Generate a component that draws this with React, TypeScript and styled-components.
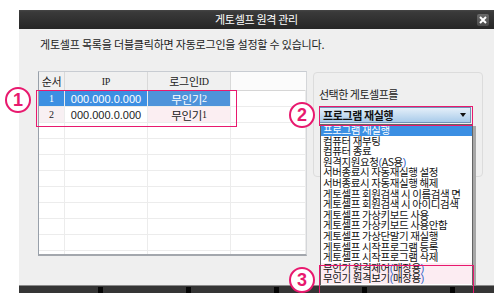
import React from "react";
import styled, { createGlobalStyle } from "styled-components";

const PINK = "#e8196e";
const KR = `"Noto Sans CJK KR", "Noto Sans", sans-serif`;

const GlobalStyle = createGlobalStyle`
  body {
    margin: 0;
    background: #ffffff;
    font-family: ${KR};
  }
`;

const Window = styled.div`
  position: relative;
  width: 475px;
  margin: 10px 0 0 19px;
`;

const TitleBar = styled.div`
  height: 19px;
  display: grid;
  grid-template-columns: 1fr auto 1fr;
  align-items: center;
  background: linear-gradient(#464646 0, #3a3a3a 2px, #262626 100%);
  color: #ffffff;
  font-size: 11px;
  letter-spacing: -0.3px;
`;

const Title = styled.span`
  grid-column: 2;
  line-height: 19px;
`;

const CloseBtn = styled.div`
  grid-column: 3;
  justify-self: end;
  margin-right: 5px;
  width: 12px;
  height: 12px;
  border-radius: 2px;
  background: linear-gradient(#6a6a6a, #4a4a4a);
  display: flex;
  align-items: center;
  justify-content: center;
`;

const Body = styled.div`
  height: 256px;
  background: #efefef;
  padding: 8px 0 0 19px;
  box-sizing: border-box;
`;

const Notice = styled.div`
  padding-left: 2px;
  font-size: 11px;
  letter-spacing: -0.2px;
  color: #222;
  line-height: 14px;
`;

const ContentRow = styled.div`
  display: flex;
  align-items: flex-start;
  gap: 6px;
  margin-top: 20px;
`;

const Table = styled.div`
  width: 269px;
  height: 185px;
  box-sizing: border-box;
  background: #ffffff;
  border-left: 1px solid #98a0aa;
  border-top: 1px solid #c8ccd2;
  border-bottom: 2px solid #a3a7ad;
  border-right: 1px solid #d4d6d9;
  display: grid;
  grid-template-columns: 26px 83px 83px 1fr;
  grid-auto-rows: 16px;
  grid-template-rows: 19px;
  overflow: hidden;
`;

const HeadCell = styled.div<{ $blank?: boolean }>`
  background: ${(p) => (p.$blank ? "#fbfbfb" : "#f0f0f0")};
  border-right: 1px solid ${(p) => (p.$blank ? "transparent" : "#d9d9d9")};
  border-bottom: 1px solid #d6d6d6;
  display: flex;
  align-items: center;
  justify-content: center;
  font-size: 11px;
  color: #222;
  letter-spacing: -0.3px;
`;

const Cell = styled.div<{ $bg?: string; $fg?: string }>`
  background: ${(p) => p.$bg || "#ffffff"};
  color: ${(p) => p.$fg || "#222"};
  border-right: 1px solid #ececec;
  border-bottom: 1px solid #ececec;
  display: flex;
  align-items: center;
  justify-content: center;
  font-size: 11px;
  font-family: "Liberation Sans", Arial, sans-serif;
`;

const KrCell = styled(Cell)`
  font-family: ${KR};
  font-size: 11.5px;
  letter-spacing: -0.3px;
`;

const Digit = styled.span`
  font-family: "Liberation Serif", serif;
  font-size: 10px;
`;

const GroupBox = styled.div`
  width: 170px;
  height: 105px;
  box-sizing: border-box;
  margin-top: 1px;
  border: 1px solid #dcdcdc;
  border-radius: 4px;
  padding: 14px 0 0 5px;
`;

const Label = styled.div`
  font-size: 11px;
  letter-spacing: -0.5px;
  color: #222;
  line-height: 14px;
`;

const SelectBox = styled.div`
  margin-top: 6px;
  width: 152px;
  height: 16px;
  box-sizing: border-box;
  border: 1px solid #6f93b8;
  background: linear-gradient(#e4eff9, #a9cbea);
  display: flex;
  align-items: center;
  justify-content: space-between;
  padding: 0 4px 0 3px;
  font-size: 11px;
  font-weight: 700;
  letter-spacing: -0.4px;
  color: #111;
`;

const Caret = styled.span`
  width: 0;
  height: 0;
  border-style: solid;
  border-width: 4px 3.5px 0 3.5px;
  border-color: #111 transparent transparent transparent;
`;

const BottomBar = styled.div`
  position: relative;
  z-index: 3;
  height: 8px;
  background: #353535;
  border-top: 1px solid #8a8a8a;
  box-sizing: border-box;
  display: flex;
  align-items: flex-end;
  padding-left: 79px;
  gap: 83px;
`;

const Notch = styled.span`
  width: 5px;
  height: 6px;
  background: #050505;
`;

const DropList = styled.div`
  position: absolute;
  z-index: 2;
  left: 301px;
  top: 114px;
  width: 153px;
  box-sizing: border-box;
  background: #ffffff;
  border: 1px solid #646464;
  box-shadow: 3px 2px 0 #a7a7a7;
  padding-bottom: 3px;
`;

const Item = styled.div<{ $active?: boolean; $marked?: boolean }>`
  height: 10.6px;
  line-height: 10.6px;
  padding-left: 2px;
  font-size: 10.5px;
  letter-spacing: -0.4px;
  white-space: nowrap;
  color: ${(p) => (p.$active ? "#ffffff" : "#111")};
  background: ${(p) => (p.$active ? "#3b8fe3" : p.$marked ? "#fcecf2" : "transparent")};
`;

const Paren = styled.span`
  color: #2f63c9;
  font-family: "Liberation Sans", Arial, sans-serif;
`;

const Marker = styled.div<{ $x: number; $y: number }>`
  position: absolute;
  z-index: 4;
  left: ${(p) => p.$x}px;
  top: ${(p) => p.$y}px;
  width: 26px;
  height: 26px;
  box-sizing: border-box;
  border: 2px solid ${PINK};
  border-radius: 50%;
  background: #ffffff;
  color: ${PINK};
  display: flex;
  align-items: center;
  justify-content: center;
  font-family: "Liberation Sans", Arial, sans-serif;
  font-weight: 700;
  font-size: 18px;
`;

const Frame = styled.div<{ $x: number; $y: number; $w: number; $h: number }>`
  position: absolute;
  z-index: 4;
  left: ${(p) => p.$x}px;
  top: ${(p) => p.$y}px;
  width: ${(p) => p.$w}px;
  height: ${(p) => p.$h}px;
  box-sizing: border-box;
  border: 1.5px solid ${PINK};
  pointer-events: none;
`;

const items = [
  "프로그램 재실행",
  "컴퓨터 재부팅",
  "컴퓨터 종료",
  "원격지원요청|AS용",
  "서버종료시 자동재실행 설정",
  "서버종료시 자동재실행 해제",
  "게토셀프 회원검색 시 이름검색 면",
  "게토셀프 회원검색 시 아이디검색",
  "게토셀프 가상키보드 사용",
  "게토셀프 가상키보드 사용안함",
  "게토셀프 가상단말기 재실행",
  "게토셀프 시작프로그램 등록",
  "게토셀프 시작프로그램 삭제",
  "무인기 원격제어|매장용",
  "무인기 원격보기|매장용",
];

const renderItem = (text: string) => {
  const [main, sub] = text.split("|");
  if (!sub) return main;
  return (
    <>
      {main}
      <Paren>(</Paren>
      {sub}
      <Paren>)</Paren>
    </>
  );
};

const rows = [
  { no: "1", ip: "000.000.0.000", id: "무인기", n: "2", selected: true },
  { no: "2", ip: "000.000.0.000", id: "무인기", n: "1", selected: false },
];

export default function App() {
  const emptyRows = Array.from({ length: 9 });
  return (
    <>
      <GlobalStyle />
      <Window>
        <TitleBar>
          <Title>게토셀프 원격 관리</Title>
          <CloseBtn>
            <svg width="8" height="8" viewBox="0 0 8 8">
              <path d="M1 1 L7 7 M7 1 L1 7" stroke="#fff" strokeWidth="2" />
            </svg>
          </CloseBtn>
        </TitleBar>
        <Body>
          <Notice>게토셀프 목록을 더블클릭하면 자동로그인을 설정할 수 있습니다.</Notice>
          <ContentRow>
            <Table>
              <HeadCell>순서</HeadCell>
              <HeadCell>
                <Digit>IP</Digit>
              </HeadCell>
              <HeadCell>
                로그인<Digit>ID</Digit>
              </HeadCell>
              <HeadCell $blank />
              {rows.map((r) => (
                <React.Fragment key={r.no}>
                  <Cell $bg={r.selected ? "#3d8fe2" : "#f8f0f3"} $fg={r.selected ? "#fff" : "#222"}>
                    <Digit>{r.no}</Digit>
                  </Cell>
                  <Cell $bg={r.selected ? "#3d8fe2" : "#ffffff"} $fg={r.selected ? "#fff" : "#222"}>
                    {r.ip}
                  </Cell>
                  <KrCell $bg={r.selected ? "#4e93da" : "#fbeef2"} $fg={r.selected ? "#fff" : "#222"}>
                    {r.id}
                    <Digit>{r.n}</Digit>
                  </KrCell>
                  <Cell />
                </React.Fragment>
              ))}
              {emptyRows.map((_, i) => (
                <React.Fragment key={i}>
                  <Cell />
                  <Cell />
                  <Cell />
                  <Cell />
                </React.Fragment>
              ))}
            </Table>
            <GroupBox>
              <Label>선택한 게토셀프를</Label>
              <SelectBox>
                <span>프로그램 재실행</span>
                <Caret />
              </SelectBox>
            </GroupBox>
          </ContentRow>
        </Body>
        <BottomBar>
          {Array.from({ length: 5 }).map((_, i) => (
            <Notch key={i} />
          ))}
        </BottomBar>
        <DropList>
          {items.map((t, i) => (
            <Item key={t} $active={i === 0} $marked={i >= 13}>
              {renderItem(t)}
            </Item>
          ))}
        </DropList>
        <Marker $x={-14} $y={77}>1</Marker>
        <Frame $x={17} $y={80} $w={201} $h={37} />
        <Marker $x={270} $y={92}>2</Marker>
        <Frame $x={300} $y={96} $w={154} $h={20} />
        <Marker $x={270} $y={257}>3</Marker>
        <Frame $x={300} $y={255} $w={155} $h={29} />
      </Window>
    </>
  );
}
